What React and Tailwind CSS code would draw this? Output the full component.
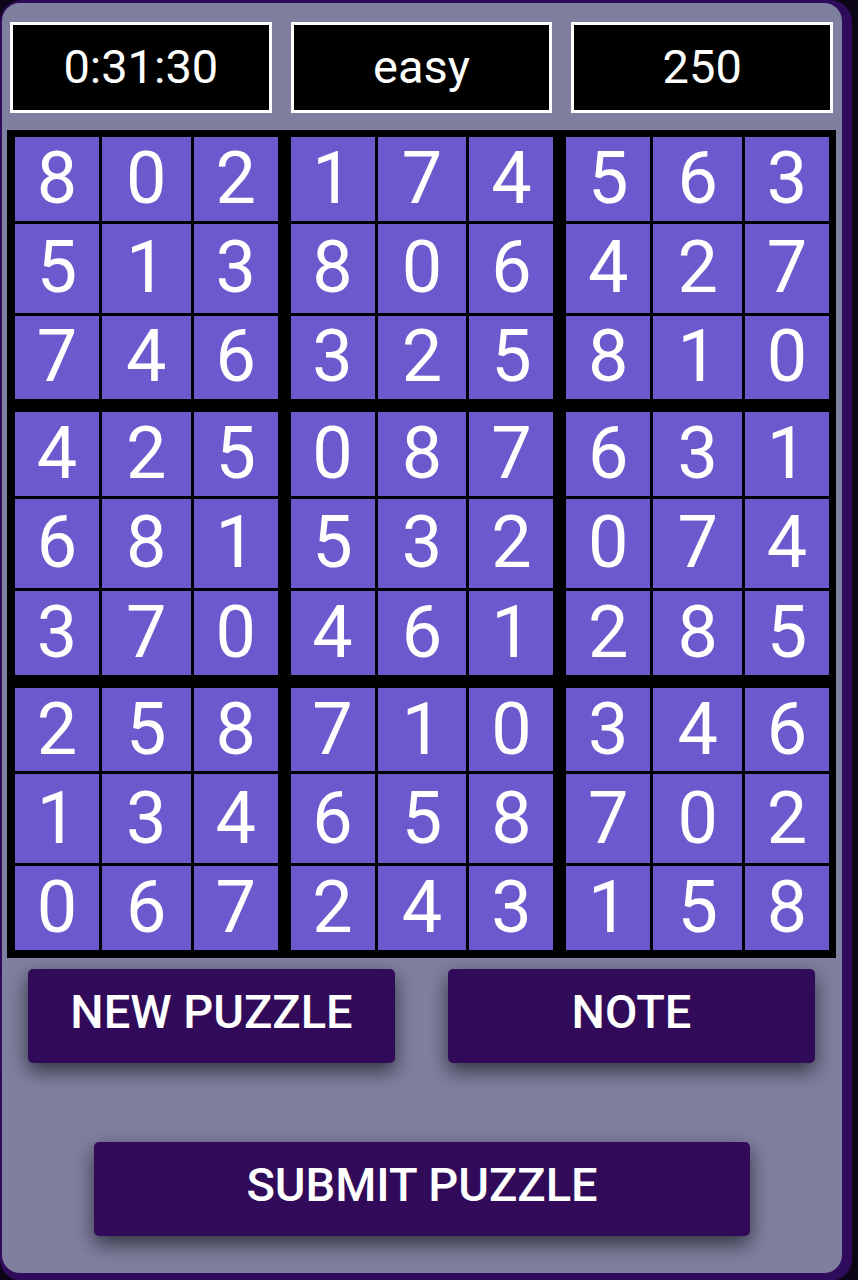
import React from "react";

const BOARD = [
  [8, 0, 2, 1, 7, 4, 5, 6, 3],
  [5, 1, 3, 8, 0, 6, 4, 2, 7],
  [7, 4, 6, 3, 2, 5, 8, 1, 0],
  [4, 2, 5, 0, 8, 7, 6, 3, 1],
  [6, 8, 1, 5, 3, 2, 0, 7, 4],
  [3, 7, 0, 4, 6, 1, 2, 8, 5],
  [2, 5, 8, 7, 1, 0, 3, 4, 6],
  [1, 3, 4, 6, 5, 8, 7, 0, 2],
  [0, 6, 7, 2, 4, 3, 1, 5, 8],
];

const STATS = ["0:31:30", "easy", "250"];

function Block({ br, bc }) {
  const cells = [];
  for (let r = 0; r < 3; r++) {
    for (let c = 0; c < 3; c++) {
      cells.push(BOARD[br * 3 + r][bc * 3 + c]);
    }
  }
  return (
    <div className="grid grid-cols-[84fr_89fr_84fr] grid-rows-[84fr_89fr_84fr] gap-[3px]">
      {cells.map((n, i) => (
        <div
          key={i}
          className="flex items-center justify-center bg-[#6a5acd] text-white text-[72px] leading-none"
        >
          {n}
        </div>
      ))}
    </div>
  );
}

function ActionButton({ children, className }) {
  return (
    <button
      className={
        "h-[94px] pb-[7px] rounded-[5px] bg-[#310b59] text-white text-[47px] font-medium uppercase shadow-[0_8px_20px_rgba(0,0,0,0.6)] " +
        className
      }
    >
      {children}
    </button>
  );
}

export default function App() {
  return (
    <div
      className="w-[858px] h-[1280px] bg-[#0c0616] overflow-hidden"
      style={{ fontFamily: "Roboto, 'Noto Sans', sans-serif" }}
    >
      <div className="w-[852px] h-[1281px] rounded-[22px] bg-[#2f0b5b] pt-[3px] pl-[2px]">
        <div className="w-[840px] h-[1270px] rounded-[18px] bg-[#7f7f9f] flex flex-col">
          {/* stats row */}
          <div className="flex gap-[19px] pl-2 pr-[9px] pt-[19px]">
            {STATS.map((s) => (
              <div
                key={s}
                className="flex-1 h-[91px] bg-black border-[3px] border-white flex items-center justify-center text-white text-[47px]"
              >
                {s}
              </div>
            ))}
          </div>

          {/* board */}
          <div className="ml-[5px] mt-[17px] w-[829px] h-[828px] bg-black pt-[7px] pl-[8px] pr-[7px] pb-[8px] grid grid-cols-3 grid-rows-3 gap-[13px]">
            {[0, 1, 2].map((br) =>
              [0, 1, 2].map((bc) => <Block key={br + "-" + bc} br={br} bc={bc} />)
            )}
          </div>

          {/* buttons */}
          <div className="flex justify-between pl-[26px] pr-[27px] mt-[11px]">
            <ActionButton className="w-[367px]">New Puzzle</ActionButton>
            <ActionButton className="w-[367px]">Note</ActionButton>
          </div>
          <div className="flex justify-center mt-[79px]">
            <ActionButton className="w-[656px]">Submit Puzzle</ActionButton>
          </div>
        </div>
      </div>
    </div>
  );
}
